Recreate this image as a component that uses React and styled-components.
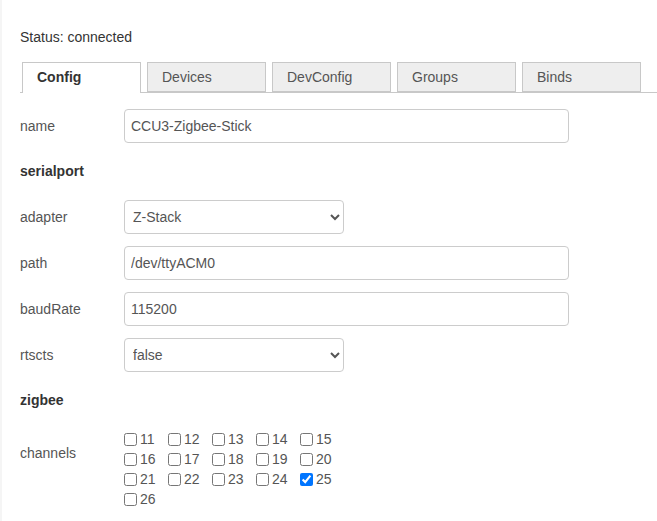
import styled, { createGlobalStyle } from "styled-components";

const GlobalStyle = createGlobalStyle`
  html, body {
    margin: 0;
    padding: 0;
    background: #fff;
  }
  body {
    font-family: "Liberation Sans", Arial, sans-serif;
    font-size: 14px;
    color: #555;
  }
`;

const Page = styled.div`
  width: 657px;
  height: 521px;
  box-sizing: border-box;
  border-left: 2px solid #f5f5f5;
  padding: 28px 0 0 18px;
  overflow: hidden;
`;

const Status = styled.div`
  height: 18px;
  line-height: 18px;
  color: #333;
  font-size: 14px;
`;

const TabBar = styled.div`
  display: flex;
  gap: 6px;
  margin-top: 16px;
  padding-left: 2px;
  border-bottom: 1px solid #c8c8c8;
  height: 30px;
  align-items: flex-end;
`;

const Tab = styled.div`
  box-sizing: border-box;
  width: 119px;
  height: ${(p) => (p.$active ? "31px" : "30px")};
  margin-bottom: ${(p) => (p.$active ? "-1px" : "0")};
  border: 1px solid #c8c8c8;
  border-bottom: ${(p) => (p.$active ? "none" : "1px solid #c8c8c8")};
  background: ${(p) => (p.$active ? "#fff" : "#eee")};
  padding: 0 0 0 14px;
  line-height: 28px;
  font-weight: ${(p) => (p.$active ? "bold" : "normal")};
  color: ${(p) => (p.$active ? "#333" : "#555")};
`;

const Form = styled.div`
  display: flex;
  flex-direction: column;
  gap: 12px;
  padding-top: 16px;
`;

const Row = styled.div`
  display: flex;
  align-items: ${(p) => (p.$top ? "flex-start" : "center")};
  min-height: ${(p) => (p.$top ? "auto" : "34px")};
`;

const Label = styled.label`
  width: 104px;
  flex: none;
  color: #555;
  padding-top: ${(p) => (p.$top ? "14px" : "0")};
  line-height: 20px;
`;

const Heading = styled.div`
  height: 33px;
  line-height: 33px;
  font-weight: bold;
  color: #333;
`;

const TextInput = styled.input`
  box-sizing: border-box;
  width: 445px;
  height: 34px;
  border: 1px solid #ccc;
  border-radius: 4px;
  padding: 0 6px;
  font-family: "Liberation Sans", Arial, sans-serif;
  font-size: 14px;
  color: #555;
  outline: none;
`;

const Select = styled.select`
  box-sizing: border-box;
  width: 220px;
  height: 34px;
  border: 1px solid #ccc;
  border-radius: 4px;
  padding: 0 4px;
  font-family: "Liberation Sans", Arial, sans-serif;
  font-size: 14px;
  color: #555;
  background: #fff;
  outline: none;
`;

const Channels = styled.div`
  display: grid;
  grid-template-columns: repeat(5, 44px);
  grid-auto-rows: 20px;
`;

const Channel = styled.label`
  display: flex;
  align-items: center;
  gap: 3px;
  color: #555;
  input {
    margin: 0;
    width: 13px;
    height: 13px;
  }
`;

const tabs = ["Config", "Devices", "DevConfig", "Groups", "Binds"];
const channels = Array.from({ length: 16 }, (_, i) => 11 + i);

export default function App() {
  return (
    <Page>
      <GlobalStyle />
      <Status>Status: connected</Status>
      <TabBar>
        {tabs.map((t, i) => (
          <Tab key={t} $active={i === 0}>{t}</Tab>
        ))}
      </TabBar>
      <Form>
        <Row>
          <Label>name</Label>
          <TextInput defaultValue="CCU3-Zigbee-Stick" />
        </Row>
        <Heading>serialport</Heading>
        <Row>
          <Label>adapter</Label>
          <Select defaultValue="zstack">
            <option value="zstack">Z-Stack</option>
          </Select>
        </Row>
        <Row>
          <Label>path</Label>
          <TextInput defaultValue="/dev/ttyACM0" />
        </Row>
        <Row>
          <Label>baudRate</Label>
          <TextInput defaultValue="115200" />
        </Row>
        <Row>
          <Label>rtscts</Label>
          <Select defaultValue="false">
            <option value="false">false</option>
            <option value="true">true</option>
          </Select>
        </Row>
        <Heading>zigbee</Heading>
        <Row $top>
          <Label $top>channels</Label>
          <Channels>
            {channels.map((c) => (
              <Channel key={c}>
                <input type="checkbox" defaultChecked={c === 25} />
                {c}
              </Channel>
            ))}
          </Channels>
        </Row>
      </Form>
    </Page>
  );
}
